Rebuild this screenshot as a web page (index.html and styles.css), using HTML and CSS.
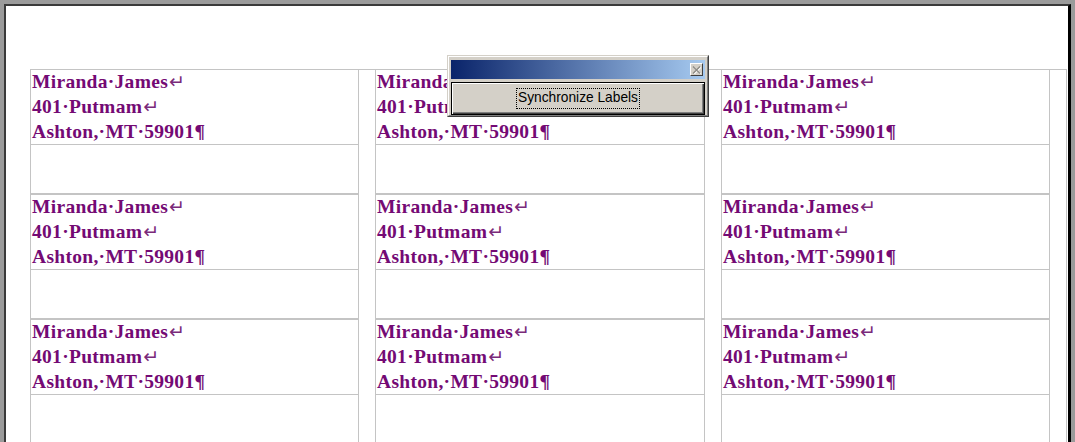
FILE: index.html
```html
<!DOCTYPE html>
<html>
<head>
<meta charset="utf-8">
<link rel="stylesheet" href="styles.css">
</head>
<body>
<div class="page">
  <div class="sheet">
    <div class="col">
      <div class="addr"><div class="ln">Miranda·James<span class="mk">↵</span></div><div class="ln">401·Putmam<span class="mk">↵</span></div><div class="ln">Ashton,·MT·59901¶</div></div>
      <div class="blank"></div>
      <div class="addr"><div class="ln">Miranda·James<span class="mk">↵</span></div><div class="ln">401·Putmam<span class="mk">↵</span></div><div class="ln">Ashton,·MT·59901¶</div></div>
      <div class="blank"></div>
      <div class="addr"><div class="ln">Miranda·James<span class="mk">↵</span></div><div class="ln">401·Putmam<span class="mk">↵</span></div><div class="ln">Ashton,·MT·59901¶</div></div>
      <div class="blank"></div>
    </div>
    <div class="gap"></div>
    <div class="col wide">
      <div class="addr"><div class="ln">Miranda·James<span class="mk">↵</span></div><div class="ln">401·Putmam<span class="mk">↵</span></div><div class="ln">Ashton,·MT·59901¶</div></div>
      <div class="blank"></div>
      <div class="addr"><div class="ln">Miranda·James<span class="mk">↵</span></div><div class="ln">401·Putmam<span class="mk">↵</span></div><div class="ln">Ashton,·MT·59901¶</div></div>
      <div class="blank"></div>
      <div class="addr"><div class="ln">Miranda·James<span class="mk">↵</span></div><div class="ln">401·Putmam<span class="mk">↵</span></div><div class="ln">Ashton,·MT·59901¶</div></div>
      <div class="blank"></div>
    </div>
    <div class="gap"></div>
    <div class="col">
      <div class="addr"><div class="ln">Miranda·James<span class="mk">↵</span></div><div class="ln">401·Putmam<span class="mk">↵</span></div><div class="ln">Ashton,·MT·59901¶</div></div>
      <div class="blank"></div>
      <div class="addr"><div class="ln">Miranda·James<span class="mk">↵</span></div><div class="ln">401·Putmam<span class="mk">↵</span></div><div class="ln">Ashton,·MT·59901¶</div></div>
      <div class="blank"></div>
      <div class="addr"><div class="ln">Miranda·James<span class="mk">↵</span></div><div class="ln">401·Putmam<span class="mk">↵</span></div><div class="ln">Ashton,·MT·59901¶</div></div>
      <div class="blank"></div>
    </div>
    <div class="gap last"></div>
  </div>
</div>

<div class="dialog">
  <div class="dialog-inner">
    <div class="titlebar">
      <span class="close">
        <svg width="9" height="8" viewBox="0 0 9 8"><path d="M1 0.5 L8 7.5 M8 0.5 L1 7.5" stroke="#ffffff" stroke-width="1.4" transform="translate(0.8,0.8)"/><path d="M1 0.5 L8 7.5 M8 0.5 L1 7.5" stroke="#8c8a85" stroke-width="1.4"/></svg>
      </span>
    </div>
    <button class="sync"><span class="focus">Synchronize Labels</span></button>
  </div>
</div>
</body>
</html>
```
FILE: styles.css
```css
html, body {
  margin: 0;
  padding: 0;
}
body {
  background: #9b9b9b;
  height: 442px;
  overflow: hidden;
}
.page {
  margin: 4px 0 0 4px;
  width: 1038px;
  height: 480px;
  background: #fff;
  border-left: 2px solid #3a3a3a;
  border-top: 2px solid #3a3a3a;
  border-right: 3px solid #000;
  padding: 63px 0 0 24px;
  box-sizing: content-box;
}
.sheet {
  display: flex;
  border-top: 1px solid #c4c4c4;
  width: 1037px;
}
.col {
  width: 329px;
  flex: none;
  border-left: 1px solid #c4c4c4;
  border-right: 1px solid #c4c4c4;
  box-sizing: border-box;
}
.col.wide {
  width: 330px;
}
.gap {
  width: 16px;
  flex: none;
}
.gap.last {
  width: 17px;
  border-right: 1px solid #c4c4c4;
  box-sizing: border-box;
}
.addr {
  height: 75px;
  box-sizing: border-box;
  border-bottom: 1px solid #c4c4c4;
  padding-left: 1px;
  font-family: "Liberation Serif", serif;
  font-weight: bold;
  font-size: 19.5px;
  line-height: 25px;
  color: #740a74;
  letter-spacing: 0.3px;
  white-space: nowrap;
  overflow: hidden;
}
.addr .ln {
  height: 25px;
}
.addr .ln:first-child {
  margin-top: -1px;
}
.mk {
  font-family: "DejaVu Sans", sans-serif;
  font-weight: normal;
  font-size: 19px;
  line-height: 0;
  color: #7a2a7a;
  letter-spacing: 0;
  margin-left: 1px;
}
.blank {
  height: 50px;
  box-sizing: border-box;
  border-bottom: 2px solid #c4c4c4;
}

/* floating toolbar */
.dialog {
  position: absolute;
  left: 447px;
  top: 55px;
  width: 262px;
  box-sizing: border-box;
  border: 1px solid;
  border-color: #d4d0c8 #404040 #404040 #d4d0c8;
  background: #d4d0c8;
}
.dialog-inner {
  border: 1px solid;
  border-color: #ffffff #808080 #808080 #ffffff;
  padding: 3px 2px 0 2px;
  display: flex;
  flex-direction: column;
  gap: 3px;
}
.titlebar {
  height: 19px;
  background: linear-gradient(to right, #0a246a, #a6caf0);
  display: flex;
  justify-content: flex-end;
  align-items: center;
  padding-right: 2px;
}
.close {
  width: 13px;
  height: 13px;
  box-sizing: border-box;
  background: #d4d0c8;
  border: 1px solid;
  border-color: #ffffff #404040 #404040 #ffffff;
  display: flex;
  align-items: center;
  justify-content: center;
}
.close svg {
  display: block;
}
.sync {
  height: 33px;
  margin: 0;
  padding: 0;
  background: #d4d0c8;
  border: 1px solid #000;
  box-shadow: inset 1px 1px 0 #ffffff, inset -1px -1px 0 #404040, inset -2px -2px 0 #808080;
  font-family: "Liberation Sans", Arial, sans-serif;
  font-size: 13.75px;
  color: #000;
  display: flex;
  align-items: center;
  justify-content: center;
}
.focus {
  border: 1px dotted #000;
  padding: 1px 1px 2px;
  line-height: 16px;
}
```
